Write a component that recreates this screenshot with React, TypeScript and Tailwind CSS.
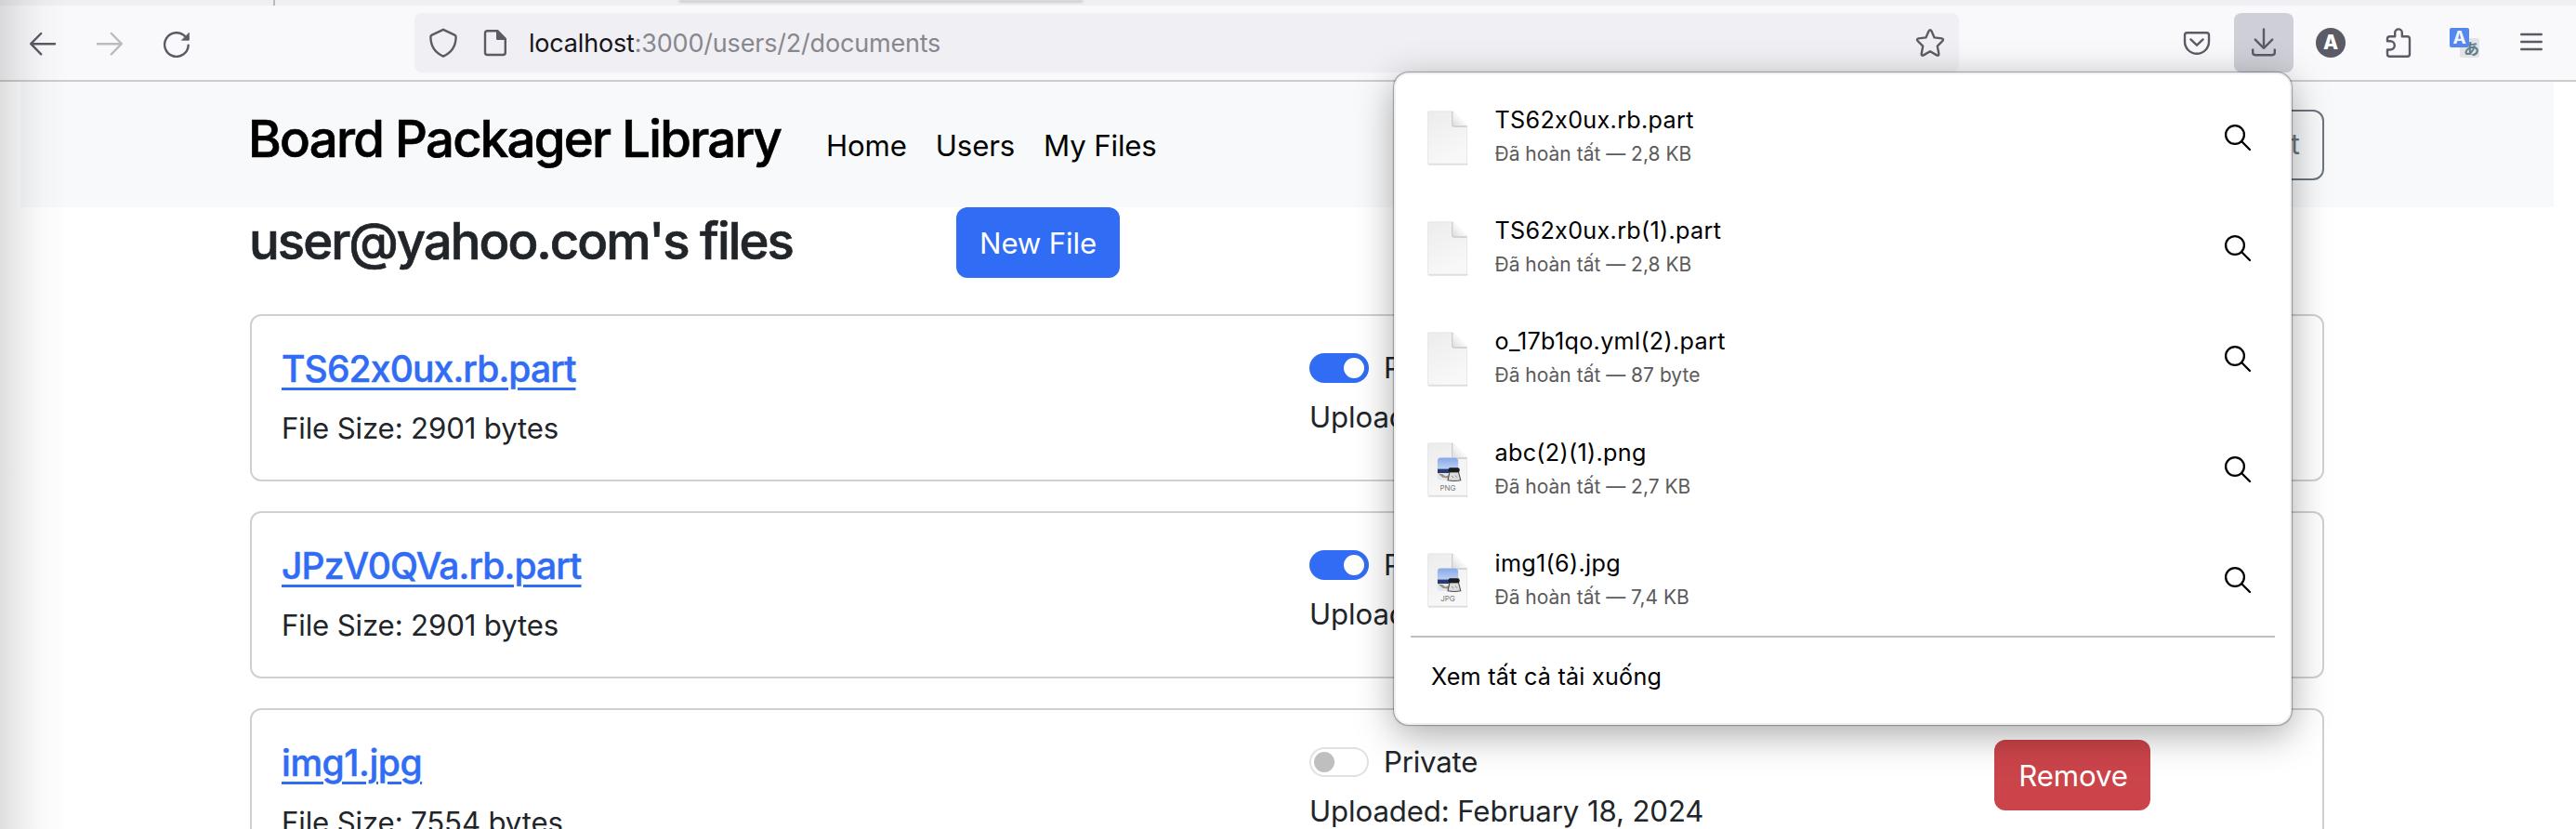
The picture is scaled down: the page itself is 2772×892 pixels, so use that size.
import type { ReactNode } from "react";

type Download = { name: string; status: string; kind?: "PNG" | "JPG" };
type Doc = { name: string; tracking: string; size: string; shared: boolean };

const downloads: Download[] = [
  { name: "TS62x0ux.rb.part", status: "Đã hoàn tất — 2,8 KB" },
  { name: "TS62x0ux.rb(1).part", status: "Đã hoàn tất — 2,8 KB" },
  { name: "o_17b1qo.yml(2).part", status: "Đã hoàn tất — 87 byte" },
  { name: "abc(2)(1).png", status: "Đã hoàn tất — 2,7 KB", kind: "PNG" },
  { name: "img1(6).jpg", status: "Đã hoàn tất — 7,4 KB", kind: "JPG" },
];

const docs: Doc[] = [
  { name: "TS62x0ux.rb.part", tracking: "tracking-[-0.87px]", size: "2901", shared: true },
  { name: "JPzV0QVa.rb.part", tracking: "tracking-[-0.9px]", size: "2901", shared: true },
  { name: "img1.jpg", tracking: "tracking-[-0.45px]", size: "7554", shared: false },
];

function Icon({ children, className = "" }: { children: ReactNode; className?: string }) {
  return (
    <svg
      viewBox="0 0 32 32"
      className={`size-8 shrink-0 ${className}`}
      fill="none"
      stroke="currentColor"
      strokeWidth="2.4"
      strokeLinecap="round"
      strokeLinejoin="round"
    >
      {children}
    </svg>
  );
}

function Toolbar() {
  return (
    <div className="flex h-[82px] shrink-0 items-center border-b-2 border-[#cccccc] bg-[#f9f9fb] pl-[30px] text-[#5b5b66]">
      <Icon>
        <path d="M29 17.2H3.4M14.2 6 3.2 17.2l11 11.2" />
      </Icon>
      <Icon className="ml-10 text-[#bcbcc0]">
        <path d="M3 17.2h25.6M17.8 6l11 11.2-11 11.2" />
      </Icon>
      <Icon className="ml-10">
        <path d="M28.7 18.6A12.8 12.8 0 1 1 25.2 9.2" />
        <path d="M29.4 5.6v7.6h-7.6z" fill="currentColor" strokeWidth="0.8" />
      </Icon>

      <div className="ml-60 flex h-16 w-[1662px] items-center rounded-lg bg-[#f0f0f4] px-[15px]">
        <Icon>
          <path d="M16 1.8 28.2 7.6q1.4.7 1.4 2.2C29.6 19.4 25.4 26.4 16 30.6 6.6 26.4 2.4 19.4 2.4 9.8q0-1.5 1.4-2.2z" />
        </Icon>
        <Icon className="ml-6">
          <path d="M7.6 3.2h10.6l8.6 8.6v14.6q0 2.6-2.6 2.6H7.6Q5 29 5 26.4V5.8q0-2.6 2.6-2.6z" />
          <path d="M18.2 3.4v8.4h8.4z" fill="currentColor" />
        </Icon>
        <div className="ml-5 flex-1 pt-0.5 text-[27px] leading-8 tracking-[-0.19px] text-[#87878f]">
          <span className="text-[#15141a]">localhost</span>:3000/users/2/documents
        </div>
        <Icon>
          <path d="M14.6 3.3q1.4-2.4 2.8 0l3.2 7.1 7.9 1q2.5.6.9 2.6l-5.6 5.6 1.5 8.2q.2 2.6-2.2 1.6L16 25.3l-7.1 4.1q-2.4 1-2.2-1.6l1.5-8.2L2.6 14q-1.6-2 .9-2.6l7.9-1z" />
        </Icon>
      </div>

      <Icon className="ml-60">
        <path d="M5.6 5.2h20.8q2.6 0 2.6 2.6v7a13 13 0 0 1-26 0v-7q0-2.6 2.6-2.6z" />
        <path d="m9.4 12.4 6.6 6.3 6.6-6.3" />
      </Icon>
      <div className="ml-6 flex size-16 items-center justify-center rounded-lg bg-[#cfcfd8]">
        <Icon>
          <path d="M16 1.4v20.4M6.8 12.6 16 21.8l9.2-9.2M4.2 23.4v3.2q0 2.6 2.6 2.6h18.4q2.6 0 2.6-2.6v-3.2" />
        </Icon>
      </div>
      <div className="ml-6 flex size-8 items-center justify-center rounded-full bg-[#5b5b66] text-[21px] leading-8 font-extrabold text-white">
        A
      </div>
      <Icon className="ml-10">
        <path d="M7.6 9.3h5.6V5.2a3.8 3.8 0 0 1 7.6 0v4.1h5.6q2.6 0 2.6 2.6v16.3q0 2.6-2.6 2.6H7.6Q5 30.8 5 28.2v-4.7h3.2a4.6 4.6 0 0 0 0-9.2H5v-2.4q0-2.6 2.6-2.6z" />
      </Icon>
      <div className="relative ml-10 size-8">
        <div className="absolute right-0 bottom-0 flex size-[21px] items-end justify-end rounded-[2px] bg-[#e3e3e5] font-['Noto_Sans_CJK_JP',sans-serif] text-[17px] leading-5 font-bold text-[#607d8b]">
          あ
        </div>
        <div className="absolute top-0 left-0 flex size-[21px] items-center justify-center rounded-[2px] bg-[#5488ee] text-[19px] leading-5 font-bold text-[#f3f5fb]">
          A
        </div>
      </div>
      <Icon className="ml-10">
        <path d="M5.2 7h21.6M5.2 15h21.6M5.2 23h21.6" />
      </Icon>
    </div>
  );
}

function SiteHeader() {
  return (
    <header className="mr-6 ml-[22px] flex h-[135px] shrink-0 items-center bg-[#f8f9fa] pr-[247px] pl-[245px] text-black">
      <h1 className="w-[622px] pb-[13px] text-[54.5px] leading-[66px] font-medium tracking-[-1.75px] whitespace-nowrap [-webkit-text-stroke:0.7px]">
        Board Packager Library
      </h1>
      <nav className="flex flex-1 gap-[31px] pt-0.5 text-[31.2px] leading-[48px] tracking-[-0.15px]">
        <a>Home</a>
        <a>Users</a>
        <a>My Files</a>
      </nav>
      <button className="h-[76px] rounded-xl border-2 border-[#6c757d] px-6 text-[31.2px] text-[#6c757d]">
        Logout
      </button>
    </header>
  );
}

function Switch({ on }: { on: boolean }) {
  return on ? (
    <span className="flex h-8 w-16 items-center justify-end rounded-full bg-[#316cf4] pr-[5px]">
      <span className="size-[22px] rounded-full bg-white" />
    </span>
  ) : (
    <span className="flex h-8 w-16 items-center rounded-full border-2 border-[#dee2e6] bg-white pl-[3px]">
      <span className="size-[22px] rounded-full bg-[#bfbfbf]" />
    </span>
  );
}

function DocCard({ doc }: { doc: Doc }) {
  return (
    <li className="grid h-[180px] shrink-0 grid-cols-[1106px_737px_168px] items-start rounded-xl border-2 border-[#d0d0d0] bg-white pl-8 text-[31.2px] leading-[48px] text-[#212529]">
      <div className="pt-[33px]">
        <a
          className={`block text-[39px] leading-[48px] font-medium text-[#316cf4] underline decoration-[3px] underline-offset-[6px] [-webkit-text-stroke:0.5px] ${doc.tracking}`}
        >
          {doc.name}
        </a>
        <p className="mt-4 tracking-[-0.15px]">File Size: {doc.size} bytes</p>
      </div>
      <div className="pt-8">
        <div className="flex items-center gap-4">
          <Switch on={doc.shared} />
          <span className="tracking-[-0.2px]">{doc.shared ? "Public" : "Private"}</span>
        </div>
        <p className="mt-[5px] tracking-[-0.12px]">Uploaded: February 18, 2024</p>
      </div>
      <button className="mt-8 h-[76px] rounded-xl bg-[#cb444a] pt-0.5 pl-0.5 tracking-[-0.1px] text-white">
        Remove
      </button>
    </li>
  );
}

function FileIcon({ kind }: { kind?: string }) {
  return (
    <svg viewBox="0 0 48 62" className="h-[62px] w-12 shrink-0">
      <defs>
        <linearGradient id="sheet" x1="0" y1="0" x2="0.4" y2="1">
          <stop offset="0" stopColor="#ececec" />
          <stop offset="1" stopColor="#f8f8f8" />
        </linearGradient>
        <linearGradient id="fold" x1="0" y1="1" x2="0.6" y2="0.4">
          <stop offset="0" stopColor="#dcdcdc" />
          <stop offset="1" stopColor="#ffffff" />
        </linearGradient>
        <linearGradient id="sky" x1="0" y1="0" x2="0" y2="1">
          <stop offset="0" stopColor="#86a8e8" />
          <stop offset="1" stopColor="#bdd2f4" />
        </linearGradient>
      </defs>
      <path d="M3.4 59.7h41.2" stroke="#cfcfcf" strokeWidth="1.6" strokeLinecap="round" />
      <path
        d="M3.5 2.8h25.7l15.3 15.4v40.3q0 .7-.7.7H3.2q-.7 0-.7-.7V3.5q0-.7 1-.7z"
        fill="url(#sheet)"
        stroke="#e4e4e4"
        strokeWidth="0.8"
      />
      <path d="M28.8 3v14q0 2 2 2h13.5" fill="none" stroke="#c9c9c9" strokeWidth="1.4" />
      <path d="M29.6 3.4v12.8q0 1.6 1.6 1.6h13z" fill="url(#fold)" />
      {kind && (
        <>
          <rect x="12.4" y="18.4" width="23" height="24" rx="3.4" fill="#fbfbfb" stroke="#e2e2e2" strokeWidth="0.6" />
          <path d="M13 21.5q0-3 3-3h16q3 0 3 3v9.5H13z" fill="url(#sky)" />
          <path d="M13 30.6h22v4.4H13z" fill="#273a75" />
          <path d="M13 35h22v4.4q0 3-3 3H16q-3 0-3-3z" fill="#dbe9f4" />
          <path d="m13.4 35.4 5 .8 3 2.4 4-1.4-1 3.4-6-.8z" fill="#a98e6c" />
          <path d="M26 33.6h9.4l2.4 9.2q-6.6 1.5-13.8 0z" fill="#dcdcdc" stroke="#4f4f4f" strokeWidth="1.1" />
          <path d="m28 38 2.2 2m2-2.4 1.6 2" stroke="#8a8a8a" strokeWidth="1" />
          <rect x="24.6" y="29.2" width="12" height="5" rx="2" fill="#1b1b1b" />
          <text x="24" y="54" textAnchor="middle" fontFamily="Inter, sans-serif" fontSize="8" fill="#7a7a7a">
            {kind}
          </text>
        </>
      )}
    </svg>
  );
}

function DownloadsPanel() {
  return (
    <div className="absolute top-[78px] left-[1500px] flex h-[702px] w-[966px] flex-col rounded-2xl border-2 border-[#f0f0f4] bg-white pt-2 text-black shadow-[0_0_1px_0.5px_rgba(0,0,0,0.3),0_10px_40px_rgba(0,0,0,0.34)]">
      {downloads.map((d) => (
        <div key={d.name} className="flex h-[119.2px] shrink-0 items-center pr-[40px] pl-8">
          <FileIcon kind={d.kind} />
          <div className="ml-[26.5px] flex-1 pb-1">
            <p className="text-[25.2px] leading-9 tracking-[0.3px]">{d.name}</p>
            <p className="mt-[5px] text-[21px] leading-7 text-[#5b5b5b]">{d.status}</p>
          </div>
          <svg viewBox="0 0 32 32" className="size-8" fill="none" stroke="black" strokeWidth="2.3" strokeLinecap="round">
            <circle cx="13" cy="13" r="9.9" />
            <path d="m20.3 20.3 8.7 8.7" />
          </svg>
        </div>
      ))}
      <div className="mx-4 h-0.5 shrink-0 bg-[#bfbfbf]" />
      <div className="flex h-[86px] items-center pl-[38px] text-[25.2px] tracking-[0.22px]">Xem tất cả tải xuống</div>
    </div>
  );
}

export default function App() {
  return (
    <div className="relative flex h-[892px] w-[2772px] flex-col overflow-hidden bg-white font-['Inter','Liberation_Sans',sans-serif] [font-feature-settings:'calt'_0]">
      <div className="flex h-1.5 shrink-0 bg-[#f0f0f4]">
        <div className="ml-[294px] w-0.5 bg-[#b9b9c0]" />
        <div className="ml-[434px] h-[3px] w-[436px] rounded-b bg-[#cdcdd2] blur-[1px]" />
      </div>
      <Toolbar />
      <SiteHeader />
      <main className="shrink-0 pr-[271px] pl-[269px]">
        <div className="flex h-[76px] items-center">
          <h2 className="-ml-px w-[761px] pb-[5px] text-[54.5px] leading-[66px] font-medium tracking-[-2px] whitespace-nowrap text-[#212529] [-webkit-text-stroke:0.7px]">
            user@yahoo.com's files
          </h2>
          <button className="h-[76px] w-44 rounded-xl bg-[#316cf4] pt-0.5 text-[31.2px] tracking-[-0.15px] text-white">
            New File
          </button>
        </div>
        <ul className="mt-[39px] flex flex-col gap-8">
          {docs.map((doc) => (
            <DocCard key={doc.name} doc={doc} />
          ))}
        </ul>
      </main>
      <DownloadsPanel />
      <div className="pointer-events-none absolute inset-y-0 left-0 w-[76px] bg-[linear-gradient(to_right,rgba(0,0,0,0.13),rgba(0,0,0,0.065)_30%,rgba(0,0,0,0.02)_62%,transparent)]" />
    </div>
  );
}
